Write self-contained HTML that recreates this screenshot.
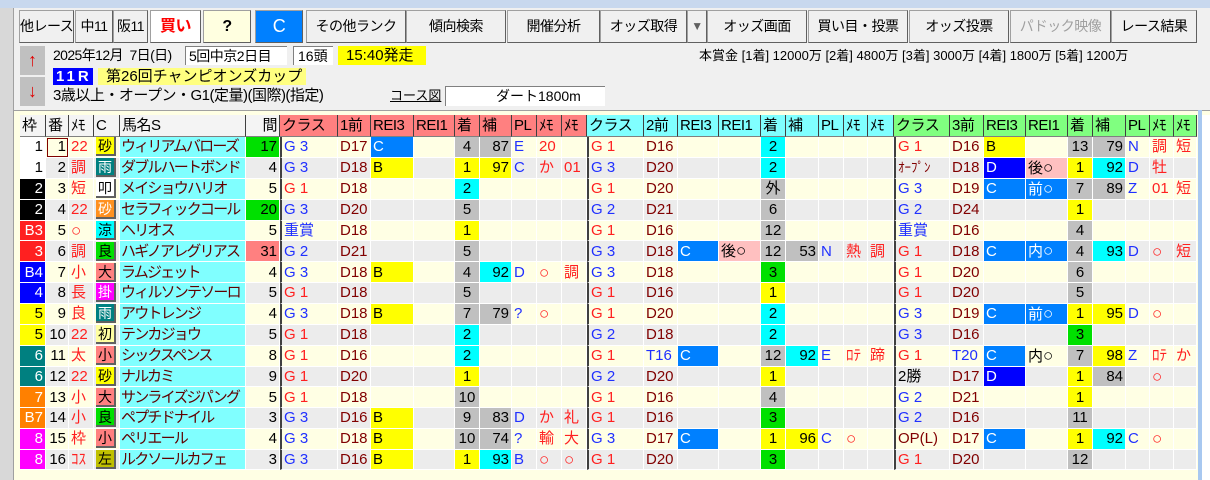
<!DOCTYPE html>
<html><head><meta charset="utf-8">
<style>
*{margin:0;padding:0;box-sizing:border-box}
body{width:1210px;height:480px;overflow:hidden;background:#f0f0f0;font-family:"Liberation Sans","Noto Sans CJK JP",sans-serif;position:relative}
.abs{position:absolute}
.tb{position:absolute;top:10px;height:33px;background:#f0f0f0;border:1px solid #a0a0a0;border-right-color:#606060;border-bottom-color:#606060;font-size:14px;text-align:center;line-height:31px;color:#000;white-space:nowrap;overflow:hidden;letter-spacing:-0.5px}
.t{table-layout:fixed;border-collapse:separate;border-spacing:0;position:absolute;left:20px;top:115px;width:1177px;font-size:15px}
.t td{height:20.75px;border-right:1px solid #fff;border-bottom:1px solid #fff;white-space:nowrap;overflow:hidden;padding:0 2px;line-height:19px;vertical-align:middle}
.t tr.h td{height:22px;font-size:15px;color:#000;border-right:1px solid #404040;border-bottom:1px solid #808080;letter-spacing:-0.5px}
.t tr.o td{background:#ffffe4}
.t tr.e td{background:#ececec}
.t td.n{background:#80ffff!important;color:#600000;letter-spacing:-1.8px;font-size:15px;padding-left:1px}
.r{text-align:right}.ce{text-align:center}
.dv{border-left:2px solid #404040}
.R{color:#ff2020}.B{color:#2030ff}.D{color:#800000}.K{color:#000}
.t td.y{background:#ffff00!important}.t td.c{background:#00ffff!important}.t td.g{background:#c0c0c0!important}
.t td.gr{background:#00e000!important}.t td.bl{background:#0080ff!important;color:#fff}.t td.db{background:#0000ff!important;color:#fff}
.t td.pk{background:#ffc0c0!important}.t td.w{background:#fff!important}
.t td.kb{background:#000!important;color:#fff}.t td.kr{background:#ff2020!important;color:#fff}.t td.kbl{background:#0000ff!important;color:#fff}
.t td.ky{background:#ffff00!important}.t td.kt{background:#008080!important;color:#fff}.t td.ko{background:#ff8000!important;color:#fff}.t td.km{background:#ff00ff!important;color:#fff}
.ic{display:inline-block;width:20px;height:19px;line-height:19px;text-align:center;font-size:14px;border-right:2px solid #606060;border-bottom:2px solid #606060}
.m{font-size:17px}
</style></head><body>
<div class="abs" style="left:0;top:0;width:1210px;height:8px;background:#c8d8ee"></div>
<div class="abs" style="left:0;top:8px;width:14px;height:472px;background:#d8d8d8;border-right:1px solid #a0a0a0"></div>
<div class="tb" style="left:19px;width:55px">他レース</div>
<div class="tb" style="left:75px;width:38px">中11</div>
<div class="tb" style="left:113px;width:35px">阪11</div>
<div class="tb" style="left:150px;width:51px;background:#fff;color:#ff0000;font-weight:bold;font-size:16px">買い</div>
<div class="tb" style="left:203px;width:48px;background:#ffffe0;font-weight:bold;font-size:16px">?</div>
<div class="tb" style="left:255px;width:48px;background:#0080ff;color:#fff;font-size:18px">C</div>
<div class="tb" style="left:306px;width:100px">その他ランク</div>
<div class="tb" style="left:406px;width:100px">傾向検索</div>
<div class="tb" style="left:507px;width:93px">開催分析</div>
<div class="tb" style="left:600px;width:87px">オッズ取得</div>
<div class="tb" style="left:687px;width:20px;color:#606060;font-size:12px">▼</div>
<div class="tb" style="left:707px;width:100px">オッズ画面</div>
<div class="tb" style="left:808px;width:100px">買い目・投票</div>
<div class="tb" style="left:909px;width:100px">オッズ投票</div>
<div class="tb" style="left:1010px;width:101px;color:#a0a0a0">パドック映像</div>
<div class="tb" style="left:1111px;width:86px">レース結果</div>

<div class="abs" style="left:20px;top:46px;width:25px;height:29px;background:#c0c0c0;color:#e00000;text-align:center;font-size:18px;line-height:29px">↑</div>
<div class="abs" style="left:20px;top:77px;width:25px;height:29px;background:#c0c0c0;color:#e00000;text-align:center;font-size:18px;line-height:29px">↓</div>
<div class="abs" style="left:53px;top:46px;font-size:14px;line-height:19px;letter-spacing:-0.6px;white-space:nowrap">2025年12月&nbsp;&nbsp;7日(日)</div>
<div class="abs" style="left:185px;top:46px;width:102px;height:19px;background:#fff;border-top:1px solid #808080;border-left:1px solid #808080;font-size:14px;line-height:18px;padding-left:3px;white-space:nowrap;letter-spacing:-0.5px">5回中京2日目</div>
<div class="abs" style="left:293px;top:46px;width:40px;height:19px;background:#fff;border-top:1px solid #808080;border-left:1px solid #808080;font-size:14px;line-height:18px;padding-left:4px">16頭</div>
<div class="abs" style="left:338px;top:46px;width:88px;height:19px;background:#ffff00;font-size:15px;line-height:19px;padding-left:8px">15:40発走</div>
<div class="abs" style="left:699px;top:46px;font-size:13px;line-height:19px;white-space:nowrap">本賞金 [1着] 12000万 [2着] 4800万 [3着] 3000万 [4着] 1800万 [5着] 1200万</div>
<div class="abs" style="left:53px;top:68px;width:40px;height:17px;background:#0000ff;color:#fff;font-size:15px;line-height:17px;font-weight:bold;letter-spacing:3px;padding-left:3px">11R</div>
<div class="abs" style="left:98px;top:68px;width:208px;height:17px;background:#ffff80;font-size:15px;line-height:17px;padding-left:8px;white-space:nowrap">第26回チャンピオンズカップ</div>
<div class="abs" style="left:53px;top:87px;font-size:15px;line-height:18px;white-space:nowrap;letter-spacing:-0.5px">3歳以上・オープン・G1(定量)(国際)(指定)</div>
<div class="abs" style="left:390px;top:88px;font-size:13px;line-height:16px;text-decoration:underline">コース図</div>
<div class="abs" style="left:445px;top:86px;width:160px;height:20px;background:#fff;border-top:1px solid #808080;border-left:1px solid #808080;font-size:14px;line-height:19px;padding-left:50px">ダート1800m</div>
<div class="abs" style="left:14px;top:110px;width:1196px;height:370px;background:#ffffe4;border-top:1px solid #a0a0a0"></div>
<div class="abs" style="left:1198px;top:110px;width:4px;height:370px;background:#a8c8f0"></div>
<div class="abs" style="left:1202px;top:115px;width:8px;height:365px;background:#fff"></div>

<table class="t">
<colgroup><col style="width:26px"><col style="width:23px"><col style="width:25px"><col style="width:26px"><col style="width:126px"><col style="width:34px"><col style="width:58px"><col style="width:33px"><col style="width:43px"><col style="width:41px"><col style="width:25px"><col style="width:32px"><col style="width:25px"><col style="width:25px"><col style="width:25px"><col style="width:57px"><col style="width:34px"><col style="width:41px"><col style="width:42px"><col style="width:25px"><col style="width:33px"><col style="width:25px"><col style="width:24px"><col style="width:26px"><col style="width:56px"><col style="width:34px"><col style="width:42px"><col style="width:42px"><col style="width:25px"><col style="width:33px"><col style="width:24px"><col style="width:24px"><col style="width:23px"></colgroup>
<tr class="h"><td style="background:#f4f4f4">枠</td><td style="background:#f4f4f4">番</td><td style="background:#f4f4f4">ﾒﾓ</td><td style="background:#f4f4f4">C</td><td style="background:#f4f4f4">馬名S</td><td style="background:#f4f4f4" class="r">間</td>
<td style="background:#ff8080">クラス</td><td style="background:#ff8080">1前</td><td style="background:#ff8080">REI3</td><td style="background:#ff8080">REI1</td><td style="background:#ff8080">着</td><td style="background:#ff8080">補</td><td style="background:#ff8080">PL</td><td style="background:#ff8080">ﾒﾓ</td><td style="background:#ff8080">ﾒﾓ</td>
<td style="background:#80ffff">クラス</td><td style="background:#80ffff">2前</td><td style="background:#80ffff">REI3</td><td style="background:#80ffff">REI1</td><td style="background:#80ffff">着</td><td style="background:#80ffff">補</td><td style="background:#80ffff">PL</td><td style="background:#80ffff">ﾒﾓ</td><td style="background:#80ffff">ﾒﾓ</td>
<td style="background:#80ff80">クラス</td><td style="background:#80ff80">3前</td><td style="background:#80ff80">REI3</td><td style="background:#80ff80">REI1</td><td style="background:#80ff80">着</td><td style="background:#80ff80">補</td><td style="background:#80ff80">PL</td><td style="background:#80ff80">ﾒﾓ</td><td style="background:#80ff80">ﾒﾓ</td></tr>

<tr class="o"><td class="w r">1</td><td class="r" style="outline:1px solid #800000;outline-offset:-2px">1</td><td class="R">22</td><td><span class="ic" style="background:#ffff00">砂</span></td><td class="n">ウィリアムバローズ</td><td class="r gr">17</td>
<td class="B dv">G 3</td><td class="D">D17</td><td class="bl">C</td><td></td><td class="g ce">4</td><td class="g r">87</td><td class="B">E</td><td class="R">20</td><td></td>
<td class="R dv">G 1</td><td class="D">D16</td><td></td><td></td><td class="c ce">2</td><td></td><td></td><td></td><td></td>
<td class="R dv">G 1</td><td class="D">D16</td><td class="y">B</td><td></td><td class="g ce">13</td><td class="g r">79</td><td class="B">N</td><td class="R">調</td><td class="R">短</td></tr>

<tr class="e"><td class="w r">1</td><td class="r">2</td><td class="R">調</td><td><span class="ic" style="background:#008080;color:#fff">雨</span></td><td class="n">ダブルハートボンド</td><td class="r">4</td>
<td class="B dv">G 3</td><td class="D">D18</td><td class="y">B</td><td></td><td class="y ce">1</td><td class="y r">97</td><td class="B">C</td><td class="R">か</td><td class="R">01</td>
<td class="B dv">G 3</td><td class="D">D20</td><td></td><td></td><td class="c ce">2</td><td></td><td></td><td></td><td></td>
<td class="D dv" style="font-size:13px">ｵｰﾌﾟﾝ</td><td class="D">D18</td><td class="db">D</td><td class="pk">後<span class="m">○</span></td><td class="y ce">1</td><td class="c r">92</td><td class="B">D</td><td class="R">牡</td><td></td></tr>

<tr class="o"><td class="kb r">2</td><td class="r">3</td><td class="R">短</td><td><span class="ic" style="background:#fff">叩</span></td><td class="n">メイショウハリオ</td><td class="r">5</td>
<td class="R dv">G 1</td><td class="D">D18</td><td></td><td></td><td class="c ce">2</td><td></td><td></td><td></td><td></td>
<td class="R dv">G 1</td><td class="D">D20</td><td></td><td></td><td class="g ce">外</td><td></td><td></td><td></td><td></td>
<td class="B dv">G 3</td><td class="D">D19</td><td class="bl">C</td><td class="bl">前<span class="m">○</span></td><td class="g ce">7</td><td class="g r">89</td><td class="B">Z</td><td class="R">01</td><td class="R">短</td></tr>

<tr class="e"><td class="kb r">2</td><td class="r">4</td><td class="R">22</td><td><span class="ic" style="background:#ff9020;color:#fff">砂</span></td><td class="n">セラフィックコール</td><td class="r gr">20</td>
<td class="B dv">G 3</td><td class="D">D20</td><td></td><td></td><td class="g ce">5</td><td></td><td></td><td></td><td></td>
<td class="B dv">G 2</td><td class="D">D21</td><td></td><td></td><td class="g ce">6</td><td></td><td></td><td></td><td></td>
<td class="B dv">G 2</td><td class="D">D24</td><td></td><td></td><td class="y ce">1</td><td></td><td></td><td></td><td></td></tr>

<tr class="o"><td class="kr r">B3</td><td class="r">5</td><td class="R m">○</td><td><span class="ic" style="background:#00ffff">涼</span></td><td class="n">ヘリオス</td><td class="r">5</td>
<td class="B dv">重賞</td><td class="D">D18</td><td></td><td></td><td class="y ce">1</td><td></td><td></td><td></td><td></td>
<td class="R dv">G 1</td><td class="D">D16</td><td></td><td></td><td class="g ce">12</td><td></td><td></td><td></td><td></td>
<td class="B dv">重賞</td><td class="D">D16</td><td></td><td></td><td class="g ce">4</td><td></td><td></td><td></td><td></td></tr>

<tr class="e"><td class="kr r">3</td><td class="r">6</td><td class="R">調</td><td><span class="ic" style="background:#00e000">良</span></td><td class="n">ハギノアレグリアス</td><td class="r" style="background:#ff8080!important">31</td>
<td class="B dv">G 2</td><td class="D">D21</td><td></td><td></td><td class="g ce">5</td><td></td><td></td><td></td><td></td>
<td class="B dv">G 3</td><td class="D">D18</td><td class="bl">C</td><td class="pk">後<span class="m">○</span></td><td class="g ce">12</td><td class="g r">53</td><td class="B">N</td><td class="R">熱</td><td class="R">調</td>
<td class="R dv">G 1</td><td class="D">D18</td><td class="bl">C</td><td class="bl">内<span class="m">○</span></td><td class="g ce">4</td><td class="c r">93</td><td class="B">D</td><td class="R m">○</td><td class="R">短</td></tr>

<tr class="o"><td class="kbl r">B4</td><td class="r">7</td><td class="R">小</td><td><span class="ic" style="background:#ff8080">大</span></td><td class="n">ラムジェット</td><td class="r">4</td>
<td class="B dv">G 3</td><td class="D">D18</td><td class="y">B</td><td></td><td class="g ce">4</td><td class="c r">92</td><td class="B">D</td><td class="R m">○</td><td class="R">調</td>
<td class="B dv">G 3</td><td class="D">D18</td><td></td><td></td><td class="gr ce">3</td><td></td><td></td><td></td><td></td>
<td class="R dv">G 1</td><td class="D">D20</td><td></td><td></td><td class="g ce">6</td><td></td><td></td><td></td><td></td></tr>

<tr class="e"><td class="kbl r">4</td><td class="r">8</td><td class="R">長</td><td><span class="ic" style="background:#ff00ff;color:#fff">掛</span></td><td class="n">ウィルソンテソーロ</td><td class="r">5</td>
<td class="R dv">G 1</td><td class="D">D18</td><td></td><td></td><td class="g ce">5</td><td></td><td></td><td></td><td></td>
<td class="R dv">G 1</td><td class="D">D16</td><td></td><td></td><td class="y ce">1</td><td></td><td></td><td></td><td></td>
<td class="R dv">G 1</td><td class="D">D20</td><td></td><td></td><td class="g ce">5</td><td></td><td></td><td></td><td></td></tr>

<tr class="o"><td class="ky r">5</td><td class="r">9</td><td class="R">良</td><td><span class="ic" style="background:#008080;color:#fff">雨</span></td><td class="n">アウトレンジ</td><td class="r">4</td>
<td class="B dv">G 3</td><td class="D">D18</td><td class="y">B</td><td></td><td class="g ce">7</td><td class="g r">79</td><td class="B">?</td><td class="R m">○</td><td></td>
<td class="R dv">G 1</td><td class="D">D20</td><td></td><td></td><td class="c ce">2</td><td></td><td></td><td></td><td></td>
<td class="B dv">G 3</td><td class="D">D19</td><td class="bl">C</td><td class="bl">前<span class="m">○</span></td><td class="y ce">1</td><td class="y r">95</td><td class="B">D</td><td class="R m">○</td><td></td></tr>

<tr class="e"><td class="ky r">5</td><td class="r">10</td><td class="R">22</td><td><span class="ic" style="background:#ffffa0">初</span></td><td class="n">テンカジョウ</td><td class="r">5</td>
<td class="R dv">G 1</td><td class="D">D18</td><td></td><td></td><td class="c ce">2</td><td></td><td></td><td></td><td></td>
<td class="B dv">G 2</td><td class="D">D18</td><td></td><td></td><td class="c ce">2</td><td></td><td></td><td></td><td></td>
<td class="B dv">G 3</td><td class="D">D16</td><td></td><td></td><td class="gr ce">3</td><td></td><td></td><td></td><td></td></tr>

<tr class="o"><td class="kt r">6</td><td class="r">11</td><td class="R">太</td><td><span class="ic" style="background:#ff8080">小</span></td><td class="n">シックスペンス</td><td class="r">8</td>
<td class="R dv">G 1</td><td class="D">D16</td><td></td><td></td><td class="c ce">2</td><td></td><td></td><td></td><td></td>
<td class="R dv">G 1</td><td class="B">T16</td><td class="bl">C</td><td></td><td class="g ce">12</td><td class="c r">92</td><td class="B">E</td><td class="R">ﾛﾃ</td><td class="R">蹄</td>
<td class="R dv">G 1</td><td class="B">T20</td><td class="bl">C</td><td class="K">内<span class="m">○</span></td><td class="g ce">7</td><td class="y r">98</td><td class="B">Z</td><td class="R">ﾛﾃ</td><td class="R">か</td></tr>

<tr class="e"><td class="kt r">6</td><td class="r">12</td><td class="R">22</td><td><span class="ic" style="background:#ffff00">砂</span></td><td class="n">ナルカミ</td><td class="r">9</td>
<td class="R dv">G 1</td><td class="D">D20</td><td></td><td></td><td class="y ce">1</td><td></td><td></td><td></td><td></td>
<td class="B dv">G 2</td><td class="D">D20</td><td></td><td></td><td class="y ce">1</td><td></td><td></td><td></td><td></td>
<td class="K dv">2勝</td><td class="D">D17</td><td class="db">D</td><td></td><td class="y ce">1</td><td class="g r">84</td><td></td><td class="R m">○</td><td></td></tr>

<tr class="o"><td class="ko r">7</td><td class="r">13</td><td class="R">小</td><td><span class="ic" style="background:#ff8080">大</span></td><td class="n">サンライズジパング</td><td class="r">5</td>
<td class="R dv">G 1</td><td class="D">D18</td><td></td><td></td><td class="g ce">10</td><td></td><td></td><td></td><td></td>
<td class="R dv">G 1</td><td class="D">D16</td><td></td><td></td><td class="g ce">4</td><td></td><td></td><td></td><td></td>
<td class="B dv">G 2</td><td class="D">D21</td><td></td><td></td><td class="y ce">1</td><td></td><td></td><td></td><td></td></tr>

<tr class="e"><td class="ko r">B7</td><td class="r">14</td><td class="R">小</td><td><span class="ic" style="background:#00e000">良</span></td><td class="n">ペプチドナイル</td><td class="r">3</td>
<td class="B dv">G 3</td><td class="D">D16</td><td class="y">B</td><td></td><td class="g ce">9</td><td class="g r">83</td><td class="B">D</td><td class="R">か</td><td class="R">礼</td>
<td class="R dv">G 1</td><td class="D">D16</td><td></td><td></td><td class="gr ce">3</td><td></td><td></td><td></td><td></td>
<td class="B dv">G 2</td><td class="D">D16</td><td></td><td></td><td class="g ce">11</td><td></td><td></td><td></td><td></td></tr>

<tr class="o"><td class="km r">8</td><td class="r">15</td><td class="R">枠</td><td><span class="ic" style="background:#ff8080">小</span></td><td class="n">ペリエール</td><td class="r">4</td>
<td class="B dv">G 3</td><td class="D">D18</td><td class="y">B</td><td></td><td class="g ce">10</td><td class="g r">74</td><td class="B">?</td><td class="R">輸</td><td class="R">大</td>
<td class="B dv">G 3</td><td class="D">D17</td><td class="bl">C</td><td></td><td class="y ce">1</td><td class="y r">96</td><td class="B">C</td><td class="R m">○</td><td></td>
<td class="D dv">OP(L)</td><td class="D">D17</td><td class="bl">C</td><td></td><td class="y ce">1</td><td class="c r">92</td><td class="B">C</td><td class="R m">○</td><td></td></tr>

<tr class="e"><td class="km r">8</td><td class="r">16</td><td class="R">ｺｽ</td><td><span class="ic" style="background:#c0c000">左</span></td><td class="n">ルクソールカフェ</td><td class="r">3</td>
<td class="B dv">G 3</td><td class="D">D16</td><td class="y">B</td><td></td><td class="y ce">1</td><td class="c r">93</td><td class="B">B</td><td class="R m">○</td><td class="R m">○</td>
<td class="R dv">G 1</td><td class="D">D20</td><td></td><td></td><td class="gr ce">3</td><td></td><td></td><td></td><td></td>
<td class="R dv">G 1</td><td class="D">D20</td><td></td><td></td><td class="g ce">12</td><td></td><td></td><td></td><td></td></tr>
</table>
</body></html>
